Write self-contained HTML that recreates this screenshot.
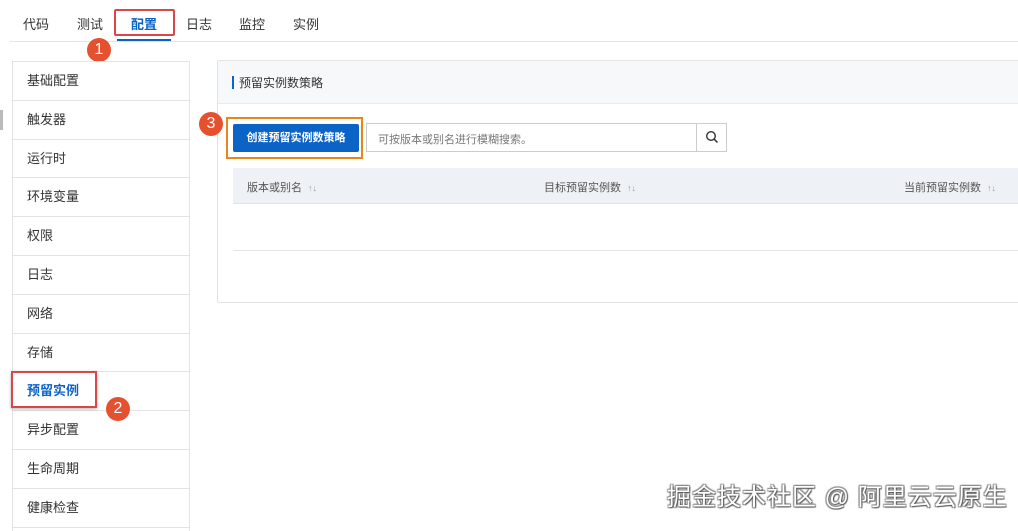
<!DOCTYPE html>
<html><head><meta charset="utf-8"><style>
*{margin:0;padding:0;box-sizing:border-box}
body{width:1018px;height:523px;overflow:hidden;background:#fff;position:relative;font-family:"Liberation Sans","Noto Sans CJK SC",sans-serif;color:#333}
.a{position:absolute}
.tab{position:absolute;top:14px;font-size:13px;color:#333}
.side{position:absolute;left:12px;top:61px;width:178px;border:1px solid #e3e3e3;border-bottom:none;height:470px}
.it{height:38.8px;border-bottom:1px solid #e3e3e3;font-size:13px;line-height:37px;padding-left:14px;color:#333}
.badge{position:absolute;width:24px;height:24px;border-radius:50%;background:#e5502f;color:#fff;font-size:16px;line-height:24px;text-align:center}
.th{position:absolute;top:179px;font-size:11px;color:#555}
.th span{color:#999;font-size:9px;margin-left:6px}
</style></head><body>
<div class="tab" style="left:23px">代码</div>
<div class="tab" style="left:77px">测试</div>
<div class="tab" style="left:131px;color:#0b63c5;font-weight:bold">配置</div>
<div class="tab" style="left:186px">日志</div>
<div class="tab" style="left:239px">监控</div>
<div class="tab" style="left:293px">实例</div>
<div class="a" style="left:10px;top:41px;width:1008px;height:1px;background:#e5e5e5"></div>
<div class="a" style="left:117px;top:39px;width:54px;height:2px;background:#0b63c5"></div>
<div class="a" style="left:114px;top:9px;width:61px;height:27px;border:2px solid #d9474a;border-radius:2px"></div>
<div class="badge" style="left:87px;top:38px">1</div>
<div class="a" style="left:0;top:110px;width:3px;height:20px;background:#bbb"></div>

<div class="side">
<div class="it">基础配置</div><div class="it">触发器</div><div class="it">运行时</div><div class="it">环境变量</div><div class="it">权限</div><div class="it">日志</div><div class="it">网络</div><div class="it">存储</div>
<div class="it" style="color:#0b63c5;font-weight:bold">预留实例</div>
<div class="it">异步配置</div><div class="it">生命周期</div><div class="it">健康检查</div>
</div>
<div class="a" style="left:11px;top:371px;width:86px;height:37px;border:2px solid #d9474a;box-shadow:0 1px 3px rgba(0,0,0,.3)"></div>
<div class="badge" style="left:106px;top:397px">2</div>

<div class="a" style="left:217px;top:60px;width:820px;height:243px;border:1px solid #e3e3e3;border-radius:2px"></div>
<div class="a" style="left:218px;top:61px;width:810px;height:43px;background:#f7f8fa;border-bottom:1px solid #eaeaea"></div>
<div class="a" style="left:232px;top:76px;width:2px;height:13px;background:#0b63c5"></div>
<div class="a" style="left:239px;top:74px;font-size:12px;color:#333">预留实例数策略</div>
<div class="a" style="left:226px;top:117px;width:137px;height:42px;border:2px solid #e8861a"></div>
<div class="a" style="left:233px;top:124px;width:126px;height:28px;background:#0b63c5;border-radius:2px;color:#fff;font-size:11px;font-weight:bold;text-align:center;line-height:28px">创建预留实例数策略</div>
<div class="badge" style="left:199px;top:112px">3</div>
<div class="a" style="left:366px;top:123px;width:361px;height:29px;border:1px solid #ccc"></div>
<div class="a" style="left:696px;top:123px;width:1px;height:29px;background:#ccc"></div>
<div class="a" style="left:378px;top:131px;font-size:11px;color:#777">可按版本或别名进行模糊搜索。</div>
<svg class="a" style="left:705px;top:130px" width="14" height="14" viewBox="0 0 14 14"><circle cx="6" cy="6" r="4.3" fill="none" stroke="#333" stroke-width="1.4"/><path d="M9.2 9.2L12.5 12.5" stroke="#333" stroke-width="1.5"/></svg>
<div class="a" style="left:233px;top:168px;width:800px;height:36px;background:#eef1f5;border-bottom:1px solid #e0e3e8"></div>
<div class="th" style="left:247px">版本或别名<span>↑↓</span></div>
<div class="th" style="left:544px">目标预留实例数<span>↑↓</span></div>
<div class="th" style="left:904px">当前预留实例数<span>↑↓</span></div>
<div class="a" style="left:233px;top:250px;width:800px;height:1px;background:#e5e5e5"></div>

<div class="a" style="left:667px;top:477px;font-size:24px;color:#fff;text-shadow:1px 1px 1px #555,-1px -1px 1px #888,1px -1px 1px #888,-1px 1px 1px #888;letter-spacing:1px">掘金技术社区 @ 阿里云云原生</div>
</body></html>
